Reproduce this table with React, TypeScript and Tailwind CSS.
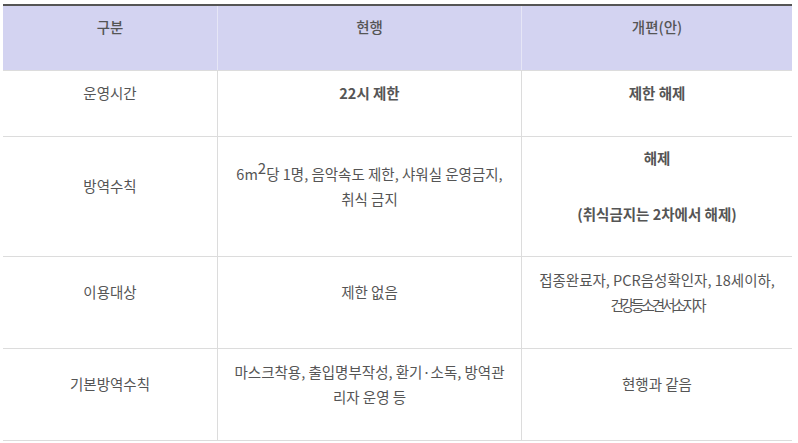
import React from 'react'

const font = { fontFamily: '"Noto Sans CJK KR", "Noto Sans", sans-serif' }

type Row = { h: string; a: React.ReactNode; b: React.ReactNode; c: React.ReactNode }

function Cell({ children, last }: { children: React.ReactNode; last?: boolean }) {
  return (
    <div
      className={
        'flex flex-col items-center justify-center pb-[22px] text-center leading-[25px] ' +
        (last ? '' : 'border-r border-[#dcdcdc]')
      }>
      {children}
    </div>
  )
}

const rows: Row[] = [
  {
    h: 'h-[66px]',
    a: '운영시간',
    b: <span className="font-bold">22시 제한</span>,
    c: <span className="font-bold">제한 해제</span>,
  },
  {
    h: 'h-[120px]',
    a: '방역수칙',
    b: (
      <>
        <span>
          6m<span className="relative -top-[6px] inline-block text-[15px] leading-none">2</span>당 1명, 음악속도 제한, 샤워실 운영금지,
        </span>
        <span>취식 금지</span>
      </>
    ),
    c: (
      <div className="font-bold">
        <p className="leading-[25px]">해제</p>
        <p className="mt-[31px] leading-[25px]">(취식금지는 2차에서 해제)</p>
      </div>
    ),
  },
  {
    h: 'h-[92px]',
    a: '이용대상',
    b: '제한 없음',
    c: (
      <>
        <span>접종완료자, PCR음성확인자, 18세이하,</span>
        <span className="tracking-[-3px]">건강등소견서소지자</span>
      </>
    ),
  },
  {
    h: 'h-[92px]',
    a: '기본방역수칙',
    b: (
      <>
        <span>마스크착용, 출입명부작성, 환기·소독, 방역관</span>
        <span>리자 운영 등</span>
      </>
    ),
    c: '현행과 같음',
  },
]

export default function App() {
  return (
    <div className="min-h-[443px] w-[798px] bg-white pl-[3px] pt-[4px] text-[14.5px] text-[#555]" style={font}>
      <div className="w-[789px] border-t-2 border-[#555]">
        {/* header */}
        <div className="grid h-[65px] grid-cols-[215px_304px_270px] border-b border-[#dcdcdc] bg-[#d3d3f1] font-medium">
          <div className="flex items-center justify-center border-r border-[#e6e6f6] pb-[22px]">구분</div>
          <div className="flex items-center justify-center border-r border-[#e6e6f6] pb-[22px]">현행</div>
          <div className="flex items-center justify-center pb-[22px]">개편(안)</div>
        </div>

        {rows.map((r, i) => (
          <div key={i} className={'grid grid-cols-[215px_304px_270px] border-b border-[#dcdcdc] ' + r.h}>
            <Cell>{r.a}</Cell>
            <Cell>{r.b}</Cell>
            <Cell last>{r.c}</Cell>
          </div>
        ))}
      </div>
    </div>
  )
}
